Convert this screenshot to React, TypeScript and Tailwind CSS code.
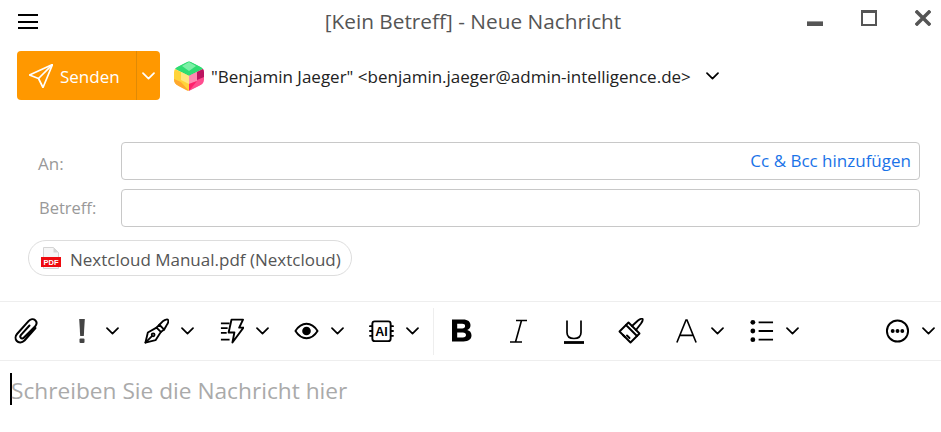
import React from 'react';

const font = { fontFamily: '"Open Sans", "Noto Sans", sans-serif' };

const Chevron = ({ className = 'text-black' }: { className?: string }) => (
  <svg viewBox="0 0 13 8" className={`w-[13px] h-[8px] ${className}`} fill="none" stroke="currentColor" strokeWidth="1.7" strokeLinecap="round" strokeLinejoin="round">
    <path d="M1 1.2 6.5 6.6 12 1.2" />
  </svg>
);

const Stroke = ({ children, size = 26 }: { children: React.ReactNode; size?: number }) => (
  <svg viewBox="0 0 26 26" width={size} height={size} fill="none" stroke="black" strokeWidth="1.9" strokeLinecap="round" strokeLinejoin="round">
    {children}
  </svg>
);

const Clip = () => (
  <Stroke>
    <path d="M21.500 10 10.500 22.500C8 25 4.500 25 2.800 23 1 21 1.300 18 3 16L14.500 3.200C16.500 1 19.500 .8 21.200 2.300 23 4 22.800 6.500 21 8.500L10 19.500C8.800 20.700 7.500 20.700 6.800 19.800 6 19 6.200 17.800 7 16.800L15.500 7.500" strokeWidth="2" />
  </Stroke>
);

const Pen = () => (
  <Stroke>
    <path d="M1.500 25 4 14.500l9-5 4.500 4.500L12 22.500Z" />
    <path d="M1.500 25 8 18.500" />
    <circle cx="9.500" cy="17" r="1.500" />
    <path d="m13 9.500 3-3 5 5-3.500 2.500" />
    <path d="m16 6.500 4-4c2-1.500 4.500-2 5-1s0 3.500-1.500 5.500L21 11.500" />
  </Stroke>
);

const Flash = () => (
  <Stroke>
    <path d="M2 5h9M2 10h7M2 15h6M2 22h9" strokeWidth="1.800" strokeLinecap="butt" />
    <path d="M13 1.200h12L21 9.500h4.500L14 25l2-10.500h-6Z" strokeWidth="2" />
  </Stroke>
);

const Eye = () => (
  <Stroke>
    <path d="M1.500 13C5 7.500 9 5.500 13 5.500S21 7.500 24.500 13C21 18.500 17 20.500 13 20.500S5 18.500 1.500 13Z" strokeWidth="2" />
    <circle cx="13" cy="13" r="4.500" fill="black" stroke="none" />
  </Stroke>
);

const AiChip = () => (
  <Stroke>
    <rect x="3.500" y="3" width="19" height="20.500" rx="2.500" strokeWidth="2" />
    <path d="M1 8h2M1 13h2M1 18h2M23 8h2M23 13h2M23 18h2" />
    <text x="13" y="17.800" textAnchor="middle" fontSize="13" fontWeight="700" fill="black" stroke="none" fontFamily="Liberation Sans, sans-serif">AI</text>
  </Stroke>
);

const Bold = () => (
  <svg viewBox="0 0 22 24" width="22" height="24" className="ml-[2px] mt-[1px]">
    <path fillRule="evenodd" d="M1 .5h11c5 0 7.500 2.300 7.500 5.800 0 2.400-1.300 4-3.300 4.700 2.600.7 4.300 2.500 4.300 5.300 0 4-3 6.200-8 6.200H1Zm5.200 4.300v4.600h5c1.900 0 2.900-.8 2.900-2.300s-1-2.300-2.900-2.300Zm0 8.700v5h5.600c2.100 0 3.200-.9 3.200-2.500s-1.100-2.500-3.200-2.500Z" fill="black" />
  </svg>
);

const Italic = () => (
  <Stroke>
    <path d="M11 2.500h11M5 24h12M16.500 2.500 10.500 24" strokeWidth="1.600" strokeLinecap="butt" />
  </Stroke>
);

const Underline = () => (
  <Stroke>
    <path d="M6 2.500v12c0 3.500 2.500 6 7 6s7-2.500 7-6v-12" strokeWidth="1.700" strokeLinecap="butt" />
    <path d="M3 24.500h20" strokeWidth="2.800" strokeLinecap="butt" />
  </Stroke>
);

const Brush = () => (
  <Stroke>
    <path d="m14 8 6-5.500c1.500-1 4-2 4.500-1.500s-.5 3-1.500 4.500L18 12" />
    <path d="m10.500 4.500 11 11-2.500 2.500L8 7Z" />
    <path d="M8 7 1.500 13.500l11 11L19 18" />
    <path d="M5 17l2 2M9 17.500l2.500 2.500" />
  </Stroke>
);

const LetterA = () => (
  <Stroke>
    <path d="M3 25 12.500 1.500h1L23 25M6.500 17.500h13" strokeWidth="1.700" strokeLinecap="butt" strokeLinejoin="miter" />
  </Stroke>
);

const ListIcon = () => (
  <Stroke>
    <circle cx="4" cy="4" r="2.500" fill="black" stroke="none" />
    <circle cx="4" cy="13" r="2.500" fill="black" stroke="none" />
    <circle cx="4" cy="22" r="2.500" fill="black" stroke="none" />
    <path d="M10 4h15M10 13h15M10 22h15" strokeWidth="2" strokeLinecap="butt" />
  </Stroke>
);

const More = () => (
  <Stroke>
    <circle cx="13" cy="13" r="11" strokeWidth="2" />
    <circle cx="8" cy="13" r="2" fill="black" stroke="none" />
    <circle cx="13" cy="13" r="2" fill="black" stroke="none" />
    <circle cx="18" cy="13" r="2" fill="black" stroke="none" />
  </Stroke>
);

const Bang = () => (
  <svg viewBox="0 0 8 26" width="8" height="26">
    <path d="M1.200 1h5.600L5.800 18H2.200Z" fill="#444" />
    <rect x="1.500" y="20.500" width="5" height="4.500" rx="1" fill="#444" />
  </svg>
);

const Avatar = () => (
  <svg viewBox="0 0 30 30" width="30" height="30" className="shrink-0">
    <defs>
      <clipPath id="avatar-hex">
        <path d="M12.500 .8c1.500-.8 3.500-.8 5 0l8 4.200c3 1.500 4.500 3.500 4.500 6.500v7c0 3-1.500 5-4.500 6.500l-8 4.200c-1.500.8-3.500.8-5 0l-8-4.200C1.500 23.500 0 21.500 0 18.500v-7C0 8.500 1.500 6.500 4.500 5Z" />
      </clipPath>
    </defs>
    <g clipPath="url(#avatar-hex)">
      <polygon points="15,0 30,7.500 15,15 0,7.500" fill="#2fdc72" />
      <polygon points="15,1 22,5 15,10 8,5" fill="#7cf0a6" />
      <polygon points="0,7.500 15,15 15,30 0,22.500" fill="#ffd43b" />
      <polygon points="7,11 15,15 15,23 7,19" fill="#ffe680" />
      <polygon points="0,18 7,21 15,30 0,30" fill="#ffa82e" />
      <polygon points="15,15 30,7.500 30,22.500 15,30" fill="#ff4d8f" />
      <polygon points="23,11 30,7.500 30,16 23,19" fill="#bb1560" />
      <polygon points="15,15 23,11 23,20 15,23" fill="#ff8ab2" />
      <polygon points="15,23 23,20 15,30" fill="#ff1f6b" />
    </g>
  </svg>
);

const PdfIcon = () => (
  <svg viewBox="0 0 20 22" width="20" height="22" className="shrink-0">
    <path d="M2.500 .5h10l5 5v16h-15Z" fill="#f6f6f6" stroke="#d4d4d4" />
    <path d="M12.500 .5v5h5Z" fill="#d5d5d5" />
    <rect x="0" y="10" width="20" height="10" fill="#ee0a0f" />
    <text x="10" y="18" textAnchor="middle" fontSize="7.500" fontWeight="700" fill="white" fontFamily="Liberation Sans, sans-serif">PDF</text>
  </svg>
);

const Drop = ({ icon, label }: { icon: React.ReactNode; label: string }) => (
  <button aria-label={label} className="flex items-center w-[75px] pl-[15px] shrink-0">
    <span className="w-[25px] flex justify-center">{icon}</span>
    <span className="ml-3"><Chevron /></span>
  </button>
);

const Tool = ({ icon, label }: { icon: React.ReactNode; label: string }) => (
  <button aria-label={label} className="w-[56.5px] flex justify-center shrink-0">{icon}</button>
);

export default function App() {
  return (
    <div className="w-[941px] h-[432px] bg-white overflow-hidden" style={font}>
      <header className="h-[44px] grid grid-cols-[1fr_auto_1fr] items-center">
        <div className="pl-[18px] -mt-px">
          <div className="w-5 flex flex-col gap-[4.5px]">
            <span className="h-[2px] bg-black" />
            <span className="h-[2px] bg-black" />
            <span className="h-[2px] bg-black" />
          </div>
        </div>
        <h1 className="text-[20.8px] text-[#555] ml-[5px] font-normal">[Kein Betreff] - Neue Nachricht</h1>
        <div className="self-start flex justify-end pr-[10px] gap-[38px] items-start pt-[10px]">
          <span className="w-4 h-[5px] bg-[#555] border-t border-[#999] mt-[11px]" />
          <span className="w-4 h-4 border-[2px] border-[#555] border-t-[3px]" />
          <svg viewBox="0 0 16 16" width="16" height="16">
            <path d="M2 2l12 12M14 2 2 14" stroke="#555" strokeWidth="3.500" strokeLinecap="square" />
          </svg>
        </div>
      </header>

      <div className="mt-[7px] pl-[17px] flex items-center">
        <div className="w-[143px] h-[49px] bg-[#ff9800] rounded-[4px] flex text-white">
          <button className="w-[120px] pl-[12px] flex items-center border-r border-[#e08a05]">
            <svg viewBox="0 0 24 24" width="24" height="24" fill="none" stroke="white" strokeWidth="1.700" strokeLinejoin="round" strokeLinecap="round">
              <path d="M23.500.5.500 11l9 3.500L14 23.500Z" />
              <path d="M23.500.5 9.500 14.500" />
            </svg>
            <span className="ml-[7px] text-[17px] pt-[3px]">Senden</span>
          </button>
          <button className="flex-1 flex items-center justify-center"><Chevron className="text-white" /></button>
        </div>
        <div className="ml-[14px]"><Avatar /></div>
        <span className="ml-[7px] pt-[3px] text-[17px] text-[#222] whitespace-nowrap">"Benjamin Jaeger" &lt;benjamin.jaeger@admin-intelligence.de&gt;</span>
        <span className="ml-[15px]"><Chevron /></span>
      </div>

      <div className="mt-[42px] flex flex-col gap-[9px] pr-[21px]">
        <div className="flex items-center">
          <label className="w-[121px] pl-[38px] pt-[6px] text-[17px] text-[#999]">An:</label>
          <div className="flex-1 h-[38px] border border-[#c8c8c8] rounded-[4px] flex items-center justify-end pr-2">
            <span className="text-[17px] text-[#1a73e8]">Cc &amp; Bcc hinzufügen</span>
          </div>
        </div>
        <div className="flex items-center">
          <label className="w-[121px] pl-[39px] text-[16.5px] text-[#999]">Betreff:</label>
          <div className="flex-1 h-[38px] border border-[#c8c8c8] rounded-[4px]" />
        </div>
      </div>

      <div className="mt-[13px] ml-[28px] w-[324px] h-[36px] border border-[#ddd] rounded-full flex items-center pl-[12px]">
        <PdfIcon />
        <span className="ml-[9px] pt-[4px] text-[17px] text-[#555] whitespace-nowrap">Nextcloud Manual.pdf (Nextcloud)</span>
      </div>

      <div className="mt-[25px] h-[60px] border-y border-[#eee] flex items-center">
        <span className="w-[54px] flex justify-center shrink-0"><Clip /></span>
        <Drop icon={<Bang />} label="Priorität" />
        <Drop icon={<Pen />} label="Signatur" />
        <Drop icon={<Flash />} label="Schnellaktion" />
        <Drop icon={<Eye />} label="Vorschau" />
        <Drop icon={<AiChip />} label="KI" />
        <span className="ml-[4px] w-px h-[47px] bg-[#eee] shrink-0" />
        <div className="-ml-px flex">
          <Tool icon={<Bold />} label="Fett" />
          <Tool icon={<Italic />} label="Kursiv" />
          <Tool icon={<Underline />} label="Unterstrichen" />
          <Tool icon={<Brush />} label="Format" />
        </div>
        <Drop icon={<LetterA />} label="Schrift" />
        <Drop icon={<ListIcon />} label="Liste" />
        <button aria-label="Mehr" className="ml-auto flex items-center w-[71px] pl-[15px] shrink-0">
          <span className="w-[25px] flex justify-center"><More /></span>
          <span className="ml-3"><Chevron /></span>
        </button>
      </div>

      <div className="pt-[12px] pl-[10px] flex items-center h-[44px]">
        <span className="w-[2px] h-[32px] bg-black -mr-[1px]" />
        <span className="text-[22.7px] text-[#aaa] pt-[4px]">Schreiben Sie die Nachricht hier</span>
      </div>
    </div>
  );
}
